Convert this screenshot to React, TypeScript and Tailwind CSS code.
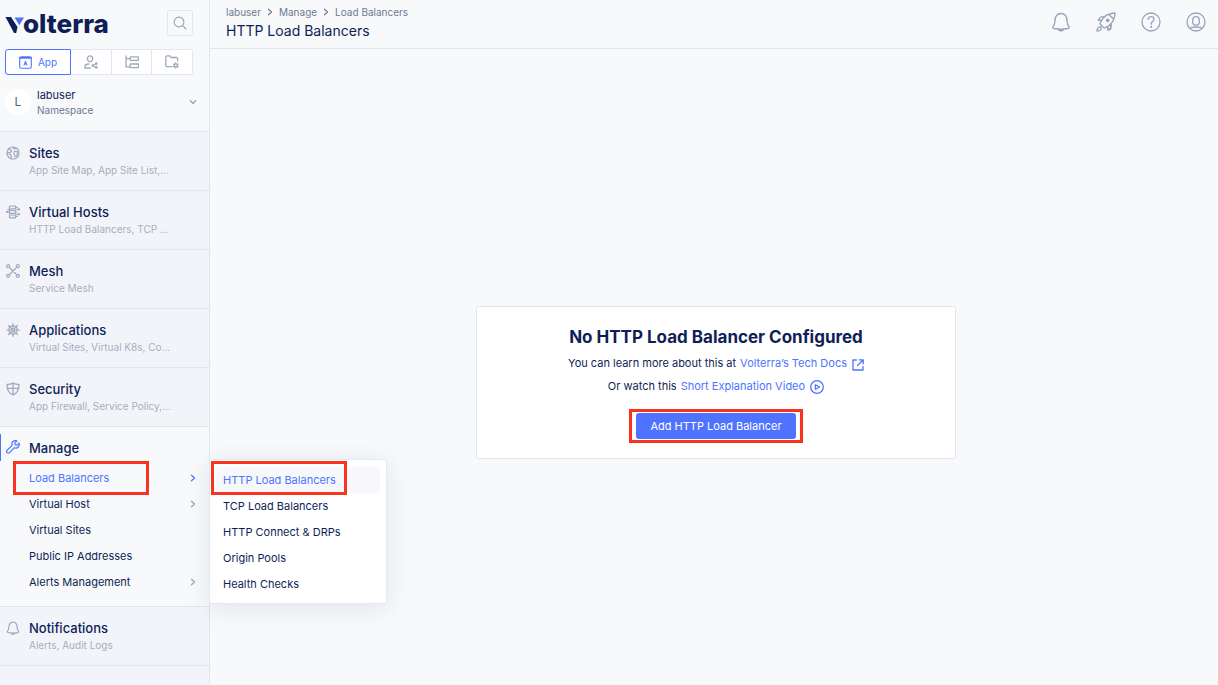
import { useState } from "react";
import type { ReactNode } from "react";
import clsx from "clsx";

type IconProps = { className?: string };

function Icon({ className, children, box = 24, stroke = 1.5 }: { className?: string; children: ReactNode; box?: number; stroke?: number }) {
  return (
    <svg
      aria-hidden="true"
      className={clsx("shrink-0", className)}
      viewBox={`0 0 ${box} ${box}`}
      fill="none"
      stroke="currentColor"
      strokeWidth={stroke}
      strokeLinecap="round"
      strokeLinejoin="round"
    >
      {children}
    </svg>
  );
}

const SearchIcon = ({ className }: IconProps) => (
  <Icon className={className} box={14} stroke={1.1}>
    <circle cx="6" cy="6" r="4.9" />
    <path d="M9.6 9.6 13 13" />
  </Icon>
);

const AppIcon = ({ className }: IconProps) => (
  <Icon className={className} box={14} stroke={1.2}>
    <rect x="0.8" y="0.8" width="12.4" height="12.4" rx="1.6" />
    <path d="M1 2h12" strokeWidth="2" />
    <path d="M5.4 9.800 7 6 8.600 9.800M6 8.700h2" strokeWidth="1.100" />
  </Icon>
);

const UserShareIcon = ({ className }: IconProps) => (
  <Icon className={className} box={14} stroke={1.3}>
    <ellipse cx="6" cy="3.8" rx="2.6" ry="2.9" />
    <path d="M6.4 13H.8v-1.3C.8 10.2 2.6 9.2 5 9" />
    <path d="m12 8.8-3.2 1.8 3.2 1.7" />
    <circle cx="12.3" cy="8.6" r=".7" />
    <circle cx="12.3" cy="12.4" r=".7" />
    <circle cx="8.7" cy="10.6" r=".7" />
  </Icon>
);

const TreeIcon = ({ className }: IconProps) => (
  <Icon className={className} box={14} stroke={1.3}>
    <path d="M1 .8v11h4M1 3.6h4" />
    <rect x="5.2" y="1.8" width="8.2" height="3.6" rx=".4" />
    <rect x="5.2" y="9" width="8.2" height="3.6" rx=".4" />
  </Icon>
);

const FolderGearIcon = ({ className }: IconProps) => (
  <Icon className={className} box={14} stroke={1.3}>
    <path d="M7 11.6H2A1.2 1.2 0 0 1 .8 10.400V2A1.200 1.200 0 0 1 2 .8h2.800l1.400 1.700h5.200a1.200 1.200 0 0 1 1.200 1.200v2.100" />
    <circle cx="10.800" cy="10.400" r="1.600" />
    <path d="M10.800 7.600v1M10.800 12.200v1M8.400 9l.8.5M12.400 11.300l.8.5M8.400 11.800l.8-.5M12.400 9.500l.8-.5" />
  </Icon>
);

const GlobeIcon = ({ className }: IconProps) => (
  <Icon className={className} box={14} stroke={1.2}>
    <circle cx="7" cy="7" r="6" />
    <path d="M3.300 2.400c.3 1.500 1.800 1.300 2.200 2.300.3 1-.8 1.500-1.700 1.600C2.500 6.500 1.800 7 1.100 7.200M3.400 8.200c1.200-.2 2 .6 1.900 1.600-.1 1-.4 1.700-.2 2.800M7.600 1.200c-.8 1.300.2 2 1.300 1.600.9-.3 1.300-.6 1.900-.5M8 6.200c.7-1 2-1.200 2.900-.6.800.6.9 1.900.2 2.600-.6.6-.4 1.500-1.200 2.100-.7.500-1.300-.1-1.300-1 0-1.100-1.300-1.500-.6-3.100Z" />
  </Icon>
);

const HostsIcon = ({ className }: IconProps) => (
  <Icon className={className} box={14} stroke={1.2}>
    <rect x="3.500" y="1" width="6" height="2.800" />
    <rect x="3.500" y="5.500" width="6" height="2.800" />
    <rect x="3.500" y="10" width="6" height="2.800" />
    <path d="M.5 6.900h3M9.500 2.400h1.800M9.500 11.400h1.800M9.500 6.900h1M10.800 4.400h2.400M10.800 9.300h2.400M1.800 4.600h1.700" />
    <circle cx="13" cy="4.400" r=".5" fill="currentColor" />
    <circle cx="13" cy="9.300" r=".5" fill="currentColor" />
    <circle cx=".9" cy="6.900" r=".5" fill="currentColor" />
  </Icon>
);

const MeshIcon = ({ className }: IconProps) => (
  <Icon className={className} box={14} stroke={1.3}>
    <circle cx="2.200" cy="2.200" r="1.500" />
    <circle cx="11.800" cy="2.200" r="1.500" />
    <circle cx="2.200" cy="11.800" r="1.500" />
    <circle cx="11.800" cy="11.800" r="1.500" />
    <path d="m4.200 4.200 5.600 5.600M9.800 4.200 4.200 9.800" />
  </Icon>
);

const HelmIcon = ({ className }: IconProps) => (
  <Icon className={className} box={14} stroke={1.2}>
    <circle cx="7" cy="7" r="4.200" />
    <circle cx="7" cy="7" r="1.300" />
    <path d="M7 .6v4.800M7 8.600v4.800M.6 7h4.800M8.600 7h4.800M2.500 2.500l3.300 3.300M8.200 8.200l3.300 3.300M11.500 2.500 8.200 5.800M5.800 8.200l-3.300 3.300" />
  </Icon>
);

const ShieldIcon = ({ className }: IconProps) => (
  <Icon className={className} box={14} stroke={1.300}>
    <path d="M7 1C5.300 2 3.200 2.500 1 2.500c-.1 5 1.600 8.700 6 10.500 4.400-1.800 6.100-5.500 6-10.500C10.800 2.500 8.700 2 7 1ZM7 1v12M1.200 6.300h11.600" />
  </Icon>
);

const WrenchIcon = ({ className }: IconProps) => (
  <Icon className={className} box={14} stroke={1.200}>
    <path d="M10.900.9a3.500 3.500 0 0 0-4.700 4.500L1.100 10.200a1.700 1.700 0 0 0 2.500 2.500l4.800-5a3.500 3.500 0 0 0 4.600-4.600l-2.100 2.100-1.700-.4-.4-1.700Z" />
  </Icon>
);

const BellIcon = ({ className }: IconProps) => (
  <Icon className={className} box={20} stroke={1.300}>
    <path d="M1.800 14.800c1.600-1.300 2-2.600 2.100-5.300C4 4.800 6 1.500 10 1.500s6 3.300 6.100 8c.1 2.700.5 4 2.100 5.300.3.900-.4 1.500-1.300 1.700-4.600.9-9.200.9-13.800 0-.9-.2-1.600-.8-1.300-1.700Z" />
    <path d="M8 17.900c.7.800 3.300.8 4 0" strokeWidth="2" />
  </Icon>
);

const SmallBellIcon = ({ className }: IconProps) => (
  <Icon className={className} box={14} stroke={1.200}>
    <path d="M1.300 10.400c1.100-.9 1.400-1.800 1.500-3.700C2.900 3.400 4.200 1.100 7 1.100s4.100 2.300 4.200 5.600c.1 1.900.4 2.800 1.500 3.700.2.600-.3 1-.9 1.200-3.200.6-6.400.6-9.600 0-.6-.2-1.100-.6-.9-1.200Z" />
    <path d="M5.800 12.700c.4.500 2 .5 2.400 0" strokeWidth="1.500" />
  </Icon>
);

const RocketIcon = ({ className }: IconProps) => (
  <Icon className={className} box={20} stroke={1.300}>
    <path d="M19 1c-5 .3-8.600 1.700-11.200 4.500-1.900 2-3.200 4.400-3.900 6.300l4.300 4.300c2-.7 4.400-2 6.300-3.900C17.300 9.600 18.700 6 19 1Z" />
    <path d="M13.200 2.400c1 2 2.400 3.400 4.400 4.400M8.300 5C5.700 4 3.300 5.500 2.200 8.400c1.200-.4 2.200-.3 3.200.4M15 11.700c1 2.600-.5 5-3.400 6.100.4-1.200.3-2.200-.4-3.200M4.600 15c-2-.3-3.400 1-3.600 4 3 0 4.500-1.500 4.200-3.500M14.200 12.500l.8 4-2 1.700" />
    <circle cx="11.700" cy="8.300" r="1.200" fill="currentColor" />
  </Icon>
);

const HelpIcon = ({ className }: IconProps) => (
  <Icon className={className} box={20} stroke={1.300}>
    <circle cx="10" cy="10" r="9" />
    <path d="M7.300 7.400c0-1.700 1.200-2.700 2.800-2.700 1.600 0 2.800 1 2.800 2.600 0 2.200-2.700 2.300-2.700 4.500v.5" />
    <circle cx="10.200" cy="14.900" r=".4" fill="currentColor" />
  </Icon>
);

const ProfileIcon = ({ className }: IconProps) => (
  <Icon className={className} box={20} stroke={1.300}>
    <circle cx="10" cy="10" r="9" />
    <rect x="6.700" y="4.600" width="6.600" height="8.600" rx="3.300" />
    <path d="M4 16.500c.6-1 3-1.500 6-1.500s5.400.5 6 1.500" />
  </Icon>
);

const ExternalIcon = ({ className }: IconProps) => (
  <Icon className={className} box={12} stroke={1.300}>
    <path d="M4.300 1H1v10h10V7.600M7.200.8h4v4M11 1 5.500 6.500" />
  </Icon>
);

const PlayIcon = ({ className }: IconProps) => (
  <Icon className={className} box={14} stroke={1.300}>
    <circle cx="7" cy="7" r="6.300" />
    <path d="M5.400 4.700v4.600L9.600 7Z" />
  </Icon>
);

const Chevron = ({ className }: IconProps) => (
  <Icon className={className} box={8} stroke={1.200}>
    <path d="m2.500 1.200 3 2.800-3 2.800" />
  </Icon>
);

function Highlight({ className }: { className: string }) {
  return <span aria-hidden="true" className={clsx("pointer-events-none absolute z-20 border-[3px] border-[#f8331f]", className)} />;
}

function Logo() {
  return (
    <a href="#" aria-label="Volterra" className="flex items-center pt-[2px] text-[#0f1e57]">
      <svg aria-hidden="true" viewBox="0 0 18 18" className="mt-[2px] h-[18px] w-[18px] overflow-visible">
        <path d="M.5 1H6l6.500 10-1.300 6H9Z" fill="#0f1e57" />
        <path d="M9.500 1.500H19L14.300 9.300Z" fill="#4f73ff" />
      </svg>
      <span className="text-[26px] leading-8 font-extrabold">olterra</span>
    </a>
  );
}

const workspaces = [
  { label: "App", icon: AppIcon },
  { label: "Shared", icon: UserShareIcon },
  { label: "System", icon: TreeIcon },
  { label: "Folders", icon: FolderGearIcon },
];

const sections = [
  { title: "Sites", detail: "App Site Map, App Site List,...", icon: GlobeIcon },
  { title: "Virtual Hosts", detail: "HTTP Load Balancers, TCP ...", icon: HostsIcon },
  { title: "Mesh", detail: "Service Mesh", icon: MeshIcon },
  { title: "Applications", detail: "Virtual Sites, Virtual K8s, Co...", icon: HelmIcon },
  { title: "Security", detail: "App Firewall, Service Policy,...", icon: ShieldIcon },
];

const manageItems = [
  { label: "Load Balancers", nested: true },
  { label: "Virtual Host", nested: true },
  { label: "Virtual Sites", nested: false },
  { label: "Public IP Addresses", nested: false },
  { label: "Alerts Management", nested: true },
];

const balancerItems = ["HTTP Load Balancers", "TCP Load Balancers", "HTTP Connect & DRPs", "Origin Pools", "Health Checks"];

function NavSection({ title, detail, icon: SectionIcon }: { title: string; detail: string; icon: (p: IconProps) => ReactNode }) {
  return (
    <a href="#" className="flex gap-[9px] border-b border-[#e3e6f1] bg-[#f3f4fa] pt-[11px] pb-[13px] pl-[6px]">
      <SectionIcon className="mt-[3px] size-[14px] text-[#a0a9bc]" />
      <span className="block">
        <span className="block text-[13px] leading-5 font-medium">{title}</span>
        <span className="block text-[10px] leading-[14px] text-[#a6aebf]">{detail}</span>
      </span>
    </a>
  );
}

function Flyout() {
  return (
    <ul className="absolute top-[-6px] left-[209px] z-10 w-[178px] rounded-[3px] border border-[#e6e8f2] bg-white px-[6px] pt-[7px] pb-[6px] shadow-[0_4px_24px_rgba(30,40,90,0.10)]">
      {balancerItems.map((label, i) => (
        <li key={label}>
          <a href="#" className={clsx("block rounded-[3px] px-[7px] leading-[26px]", i === 0 ? "bg-[#f7f8fb] text-[#4f73ff]" : "text-[#0f1e57]")}>
            {label}
          </a>
        </li>
      ))}
      <Highlight className="top-px left-px h-[34px] w-[136px]" />
    </ul>
  );
}

function Sidebar() {
  const [workspace, setWorkspace] = useState("App");
  return (
    <aside className="flex w-[210px] shrink-0 flex-col border-r border-[#e3e6f1] bg-[#f3f4fa]">
      <div className="border-b border-[#e3e6f1] bg-[#f7f9fb] pt-[6px] pr-4 pb-[14px] pl-[5px]">
        <div className="flex items-center justify-between">
          <Logo />
          <button type="button" aria-label="Search" className="flex size-[26px] items-center justify-center rounded-[3px] border border-[#e3e6f1] text-[#98a3ba]">
            <SearchIcon className="size-[14px]" />
          </button>
        </div>
        <div className="mt-[9px] flex rounded-[3px]">
          {workspaces.map(({ label, icon: TabIcon }) => {
            const active = workspace === label;
            return (
              <button
                key={label}
                type="button"
                aria-label={label}
                aria-pressed={active}
                onClick={() => setWorkspace(label)}
                className={clsx(
                  "flex h-[26px] items-center justify-center gap-[6px] border bg-white text-[10px] first:rounded-l-[3px] last:rounded-r-[3px]",
                  active ? "w-[66px] border-[#4f73ff] text-[#4f73ff]" : "flex-1 border-l-0 border-[#e3e6f1] text-[#a0a9bc]",
                )}
              >
                <TabIcon className={active ? "size-[13px]" : "size-[14px]"} />
                {active && label}
              </button>
            );
          })}
        </div>
        <button type="button" className="mt-3 flex w-full items-center text-left">
          <span className="flex size-[26px] items-center justify-center rounded-full bg-white text-[12px] text-[#56617f]">L</span>
          <span className="ml-[6px] flex-1">
            <span className="block text-[11px] leading-4">labuser</span>
            <span className="block text-[10px] leading-[14px] text-[#6f7a90]">Namespace</span>
          </span>
          <Chevron className="-mr-1 size-2 rotate-90 text-[#98a3ba]" />
        </button>
      </div>
      <nav aria-label="Main">
        {sections.map((s) => (
          <NavSection key={s.title} {...s} />
        ))}
        <div className="border-b border-[#e3e6f1] bg-[#f7f9fb] pt-[11px] pb-[11px]">
          <a href="#" className="relative flex gap-[9px] pl-[6px]">
            <span className="absolute -top-1 left-0 h-[27px] w-px bg-[#4f73ff]" />
            <WrenchIcon className="mt-[2px] size-[14px] text-[#4f73ff]" />
            <span className="text-[13px] leading-5 font-medium">Manage</span>
          </a>
          <div className="relative mt-[7px] text-[11px]">
            <ul>
              {manageItems.map(({ label, nested }, i) => (
                <li key={label}>
                  <a href="#" className={clsx("flex items-center justify-between pr-3 pl-[29px] leading-[26px]", i === 0 && "text-[#4f73ff]")}>
                    {label}
                    {nested && <Chevron className={clsx("size-2", i === 0 ? "text-[#4f73ff]" : "text-[#98a3ba]")} />}
                  </a>
                </li>
              ))}
            </ul>
            <Highlight className="-top-1 left-[13px] h-[34px] w-[136px]" />
            <Flyout />
          </div>
        </div>
        <NavSection title="Notifications" detail="Alerts, Audit Logs" icon={SmallBellIcon} />
      </nav>
    </aside>
  );
}

const trail = ["labuser", "Manage", "Load Balancers"];

const tools = [
  { label: "Notifications", icon: BellIcon },
  { label: "Quick start", icon: RocketIcon },
  { label: "Help", icon: HelpIcon },
  { label: "Profile", icon: ProfileIcon },
];

function Header() {
  return (
    <header className="flex items-start justify-between border-b border-[#e3e6f1] pr-3 pl-4">
      <div className="pt-1 pb-[7px]">
        <nav aria-label="Breadcrumb" className="flex items-center gap-[5px] text-[10px] leading-4 text-[#6f7a90]">
          {trail.map((t, i) => (
            <span key={t} className="flex items-center gap-[5px]">
              {i > 0 && <Chevron className="size-2" />}
              <a href="#">{t}</a>
            </span>
          ))}
        </nav>
        <h1 className="mt-px text-[14px] leading-5">HTTP Load Balancers</h1>
      </div>
      <div className="flex gap-[25px] pt-3 text-[#98a3ba]">
        {tools.map(({ label, icon: ToolIcon }) => (
          <button key={label} type="button" aria-label={label}>
            <ToolIcon className="size-5" />
          </button>
        ))}
      </div>
    </header>
  );
}

export default function App() {
  return (
    <div className="flex min-h-screen overflow-hidden bg-[#f7f9fb] font-['Inter',sans-serif] text-[#0f1e57]">
      <Sidebar />
      <div className="flex min-w-0 flex-1 flex-col">
        <Header />
        <main className="flex flex-1 items-center justify-center pt-[31px] pl-1">
          <section className="flex w-full max-w-[480px] flex-col items-center rounded-[3px] border border-[#e1e6ee] bg-white pt-[18px] pb-[15px] text-[11px] leading-[23px]">
            <h2 className="text-[17px] leading-6 font-bold">No HTTP Load Balancer Configured</h2>
            <p className="mt-[3px] flex items-center gap-1">
              You can learn more about this at
              <a href="#" className="flex items-center gap-[5px] text-[#4f73ff]">
                Volterra’s Tech Docs
                <ExternalIcon className="mt-[3px] size-3" />
              </a>
            </p>
            <p className="flex items-center gap-1">
              Or watch this
              <a href="#" className="flex items-center gap-[5px] text-[#4f73ff]">
                Short Explanation Video
                <PlayIcon className="size-[14px]" />
              </a>
            </p>
            <div className="mt-[11px] border-[3px] border-[#f8331f] px-1 py-px">
              <button type="button" className="block rounded-[3px] bg-[#4f73ff] px-[14px] leading-[26px] text-white">
                Add HTTP Load Balancer
              </button>
            </div>
          </section>
        </main>
      </div>
    </div>
  );
}
